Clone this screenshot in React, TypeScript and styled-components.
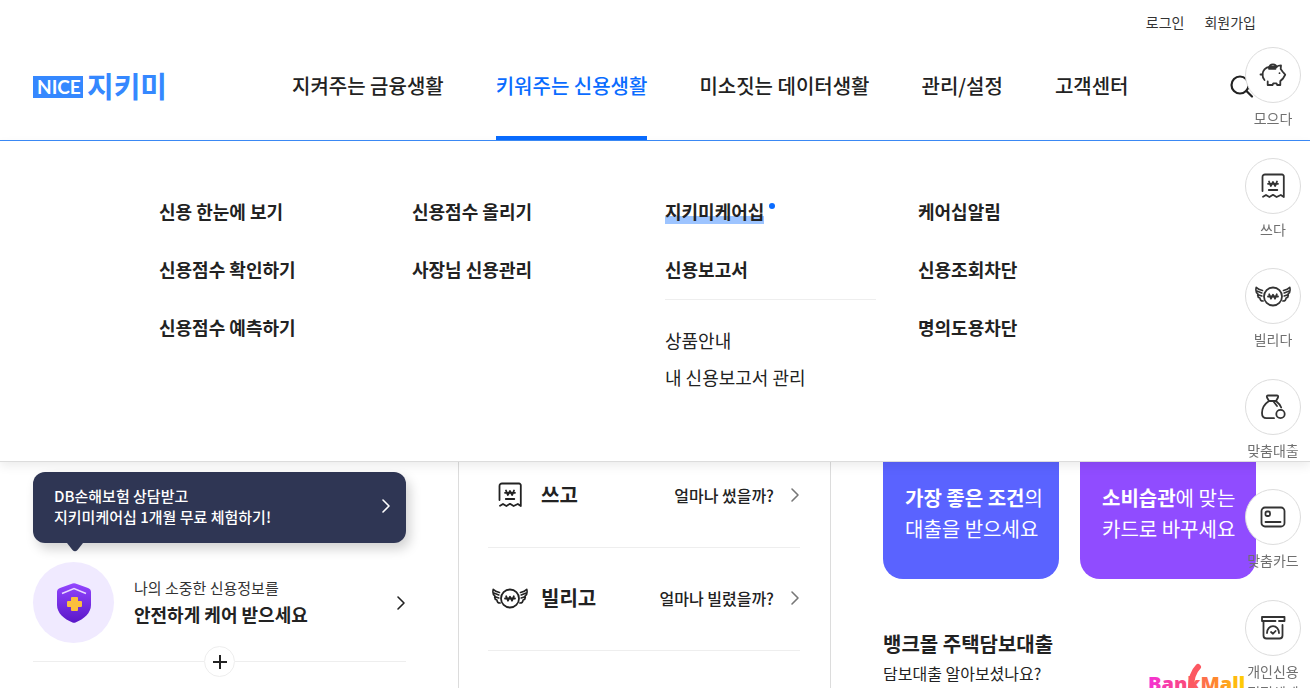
import React from 'react';
import styled, { createGlobalStyle } from 'styled-components';

const GlobalStyle = createGlobalStyle`
  *, *::before, *::after { box-sizing: border-box; }
  body {
    margin: 0;
    background: #fff;
    color: #222;
    font-family: 'Noto Sans CJK KR', 'Noto Sans', sans-serif;
    font-size: 16px;
  }
  a { color: inherit; text-decoration: none; }
  ul { list-style: none; margin: 0; padding: 0; }
  button { font: inherit; color: inherit; background: none; border: 0; padding: 0; cursor: pointer; }
  h2, h3, p { margin: 0; }
  svg { display: block; flex: none; }
`;

const Page = styled.div`
  height: 100vh;
  overflow: hidden;
`;

const Header = styled.header`
  position: relative;
  z-index: 2;
  background: #fff;
  border-bottom: 1px solid #3b8af7;
  padding: 0 54px 0 33px;
`;

const Utility = styled.nav`
  display: flex;
  justify-content: flex-end;
  gap: 20px;
  padding-top: 12px;
  font-size: 14px;
  line-height: 20px;
  color: #333;
`;

const NavBar = styled.div`
  display: flex;
  align-items: stretch;
  height: 108px;
`;

const LogoLink = styled.a`
  display: flex;
  align-items: center;
  width: 259px;
`;

const NavList = styled.ul`
  display: flex;
  gap: 52px;
  flex: 1;
`;

const NavLink = styled.a<{ $active?: boolean }>`
  display: flex;
  align-items: center;
  height: 100%;
  font-size: 20px;
  font-weight: 500;
  line-height: 28px;
  white-space: nowrap;
  color: ${(p) => (p.$active ? '#0a6cff' : '#222')};
  box-shadow: ${(p) => (p.$active ? 'inset 0 -4px 0 #0a6cff' : 'none')};
`;

const SearchButton = styled.button`
  display: flex;
  align-items: center;
`;

const MegaMenu = styled.nav`
  position: relative;
  z-index: 2;
  display: grid;
  grid-template-columns: repeat(4, minmax(0, 1fr));
  gap: 42px;
  padding: 57px 181px 71px 159px;
  background: #fff;
  border-bottom: 1px solid #dcdcdc;
  box-shadow: 0 4px 10px rgba(0, 0, 0, 0.08);
`;

const MenuColumn = styled.ul`
  display: flex;
  flex-direction: column;
  gap: 32px;
`;

const MenuLink = styled.a<{ $current?: boolean }>`
  display: inline-block;
  position: relative;
  font-size: 18px;
  font-weight: 700;
  line-height: 26px;
  background: ${(p) =>
    p.$current
      ? 'linear-gradient(#9dc4ff, #9dc4ff) 0 18px / 100% 8px no-repeat'
      : 'none'};
`;

const NewDot = styled.span`
  position: absolute;
  top: 5px;
  right: -11px;
  width: 6px;
  height: 6px;
  border-radius: 50%;
  background: #0a6cff;
`;

const SubMenu = styled.ul`
  display: flex;
  flex-direction: column;
  gap: 11px;
  margin-top: 17px;
  padding-top: 27px;
  border-top: 1px solid #eee;
  font-size: 18px;
  line-height: 26px;
`;

const Main = styled.main`
  display: grid;
  grid-template-columns: 425fr 373fr 425fr;
  height: 100%;
  padding: 0 54px 0 33px;
`;

const CarePanel = styled.section`
  padding: 10px 52px 0 0;
`;

const Banner = styled.a`
  position: relative;
  display: flex;
  align-items: center;
  justify-content: space-between;
  padding: 13px 15px 16px 21px;
  border-radius: 12px;
  background: #2f3654;
  box-shadow: 4px 6px 12px rgba(0, 0, 0, 0.18);
  color: #fff;
  font-size: 15px;
  font-weight: 500;
  line-height: 21px;
`;

const BannerTail = styled.svg`
  position: absolute;
  left: 34px;
  top: 100%;
`;

const CareLink = styled.a`
  display: flex;
  align-items: center;
  gap: 20px;
  margin-top: 19px;
`;

const ShieldBadge = styled.span`
  display: flex;
  align-items: center;
  justify-content: center;
  width: 81px;
  height: 81px;
  border-radius: 50%;
  background: #f0eaff;
`;

const CareText = styled.span`
  flex: 1;
  display: flex;
  flex-direction: column;
  padding-bottom: 3px;
  font-size: 15px;
  line-height: 25px;
  color: #333;
`;

const CareStrong = styled.strong`
  font-size: 18px;
  line-height: 28px;
  color: #222;
`;

const MoreLine = styled.div`
  display: flex;
  align-items: center;
  margin-top: 3px;

  &::before, &::after {
    content: '';
    flex: 1;
    height: 1px;
    background: #eee;
  }
`;

const MoreButton = styled.button`
  display: flex;
  align-items: center;
  justify-content: center;
  width: 31px;
  height: 31px;
  border: 1px solid #eee;
  border-radius: 50%;
`;

const ServicePanel = styled.section`
  border: solid #dcdcdc;
  border-width: 0 1px;
  padding: 0 30px 0 29px;
`;

/* The list is scrolled slightly under the open menu. */
const ServiceList = styled.ul`
  margin-top: -17px;
`;

const ServiceLink = styled.a`
  display: flex;
  align-items: center;
  height: 103px;
  padding-bottom: 2px;
  border-bottom: 1px solid #eee;
`;

const ServiceIcon = styled.span`
  display: flex;
  justify-content: center;
  width: 43px;
  margin-right: 10px;
`;

const ServiceName = styled.strong`
  flex: 1;
  font-size: 20px;
  line-height: 28px;
`;

const ServiceHint = styled.span`
  margin-right: 16px;
  font-size: 16px;
  font-weight: 500;
  line-height: 24px;
`;

const OfferPanel = styled.section`
  padding-left: 52px;
`;

const CardRow = styled.div`
  display: grid;
  grid-template-columns: repeat(2, minmax(0, 1fr));
  gap: 21px;
`;

const OfferCard = styled.a<{ $color: string }>`
  padding: 20px 0 35px 22px;
  border-radius: 0 0 20px 20px;
  background: ${(p) => p.$color};
  color: #fff;
  font-size: 20px;
  line-height: 31px;
  white-space: nowrap;
`;

const BankLink = styled.a`
  display: flex;
  justify-content: space-between;
  margin-top: 50px;
`;

const BankTitle = styled.h3`
  font-size: 20px;
  line-height: 30px;
`;

const BankText = styled.p`
  font-size: 16px;
  line-height: 28px;
`;

const BankLogo = styled.svg`
  margin: 33px 10px 0 0;
`;

const QuickMenu = styled.ul`
  position: fixed;
  z-index: 3;
  top: 47px;
  right: 9px;
  display: grid;
  grid-template-rows: repeat(6, 1fr);
  height: 663px;
`;

const QuickLink = styled.a`
  display: flex;
  flex-direction: column;
  align-items: center;
  gap: 5px;
  width: 56px;
  font-size: 14px;
  line-height: 21px;
  text-align: center;
  color: #707070;
`;

const QuickCircle = styled.span`
  display: flex;
  align-items: center;
  justify-content: center;
  width: 56px;
  height: 56px;
  border: 1px solid #dcdcdc;
  border-radius: 50%;
  background: #fff;
  color: #333;
`;

const stroke = {
  fill: 'none',
  stroke: 'currentColor',
  strokeWidth: 1.8,
  strokeLinecap: 'round' as const,
  strokeLinejoin: 'round' as const,
};

const NiceLogo = () => (
  <svg width="140" height="48" viewBox="0 0 140 48" role="img" aria-label="NICE 지키미">
    <rect x="0" y="14" width="50" height="22" fill="#3588ff" />
    <text x="4" y="32" fill="#fff" fontFamily="Lato, sans-serif" fontWeight="700" fontSize="19">NICE</text>
    <text x="54" y="36" fill="#3588ff" fontFamily="'Noto Sans CJK KR', sans-serif" fontWeight="700" fontSize="29">지키미</text>
  </svg>
);

const Chevron = ({ color }: { color: string }) => (
  <svg width="10" height="16" viewBox="0 0 10 16" fill="none" stroke={color} strokeWidth="1.600" strokeLinecap="round" strokeLinejoin="round">
    <path d="M2 2l6 6-6 6" />
  </svg>
);

const PigIcon = () => (
  <svg width="28" height="28" viewBox="0 0 28 28" {...stroke}>
    <path d="M5.500 19C4 17.300 3.500 15.500 3.500 13.500 3.500 9.500 6.500 6.300 10.500 6h6.500c1.500-1 3-1.600 5-1.600l-.3 3.600 1.800 2.500 2.700 3.200-2.200 3.800c-1 1-1.700 1.800-2.700 2.400V24h-3l-.8-1.700h-3.200L13.500 24H8.700v-3.500" />
    <path d="M10 7.500c.2-2.700 1.800-4 4-4s3.300 1 3.500 2.800M10 7.800h6.500M1.500 13.500h2" />
    <circle cx="20.500" cy="12.200" r=".9" fill="currentColor" stroke="none" />
  </svg>
);

const ReceiptIcon = () => (
  <svg width="26" height="28" viewBox="0 0 26 28" {...stroke}>
    <path d="M2.500 19V5A2.500 2.500 0 0 1 5 2.500H22A1.800 1.800 0 0 1 23.800 4.300V25l-3-2-4.200 2-3.600-2.200-3.600 2.200-3.400-2L3 24.800" />
    <path d="M9 9.500l1.800 4.500L13 10l2.200 4L17 9.500M8 11.800h10M8.800 18h8.500" />
  </svg>
);

const WingIcon = () => (
  <svg width="36" height="24" viewBox="0 0 36 24" {...stroke}>
    <circle cx="18" cy="12.500" r="9" />
    <path d="M14.200 10.300l1.800 4.400 2-4 2 4 1.800-4.400M13 12.500h10" />
    <path d="M7.500 6.500C5.500 6 3 5.200 1.200 3.400.5 6.500 1.200 9 2.900 10c-.5 1.900.2 3.600 2 4.100.2 1.900 1.300 3 3.300 2.900M1.800 7l5 1.900M3.800 11l3 1" strokeWidth="1.600" />
    <path d="M28.500 6.500c2-.5 4.500-1.300 6.300-3.100.7 3.100 0 5.600-1.700 6.600.5 1.900-.2 3.600-2 4.100-.2 1.900-1.300 3-3.300 2.900M34.200 7l-5 1.900M32.200 11l-3 1" strokeWidth="1.600" />
  </svg>
);

const BagIcon = () => (
  <svg width="28" height="28" viewBox="0 0 28 28" {...stroke}>
    <path d="M10 8L8 4.500C7.500 3.300 8 2.500 9.200 2.500h8.600c1.200 0 1.700.8 1.200 2L17 8zM10 8C5.500 11 3 15.500 3 20c0 3.800 1.500 5.200 4.500 5.200H15M17 8c2.500 2 4.200 4 5.200 6.500M14.500 8.500l3.500 4.500" />
    <circle cx="21.500" cy="21" r="4.200" />
  </svg>
);

const CardIcon = () => (
  <svg width="26" height="22" viewBox="0 0 26 22" {...stroke}>
    <rect x="1.500" y="1.500" width="23" height="19" rx="3.500" />
    <rect x="5.500" y="5.500" width="4.500" height="4.500" rx="1.500" />
    <path d="M5.500 16h15" />
  </svg>
);

const ScoreIcon = () => (
  <svg width="26" height="26" viewBox="0 0 26 26" {...stroke}>
    <path d="M15.500 6H2V2h22.500v4H19M3.500 6v14.500a3 3 0 0 0 3 3h13a3 3 0 0 0 3-3V10" />
    <path d="M7 18C7 14 9.600 11.200 13 11.200s6 2.800 6 6.800M11 17l2 1.700 2.600-2.700" />
  </svg>
);

const ShieldIcon = () => (
  <svg width="36" height="40" viewBox="0 0 36 40">
    <defs>
      <linearGradient id="shield" x1="0" y1="0" x2="0" y2="1">
        <stop offset="0" stopColor="#9346ff" />
        <stop offset="1" stopColor="#5a17c8" />
      </linearGradient>
    </defs>
    <path d="M16.500.5q1.500-.6 3 0L32 5q3 1 3 4v13c0 8-7 14-15.500 17.500q-1.500.5-3 0C8 36 1 30 1 22V9q0-3 3-4z" fill="url(#shield)" />
    <path d="M6 10.500l12-5 12 5" fill="none" stroke="#ead9ff" strokeWidth="1.500" />
    <path d="M16 14h5q1 0 1 1v3h3q1 0 1 1v4q0 1-1 1h-3v3q0 1-1 1h-5q-1 0-1-1v-3h-3q-1 0-1-1v-4q0-1 1-1h3v-3q0-1 1-1z" fill="#fbbf3c" />
  </svg>
);

const navItems = ['지켜주는 금융생활', '키워주는 신용생활', '미소짓는 데이터생활', '관리/설정', '고객센터'];

const menuColumns: { label: string; current?: boolean; children?: string[] }[][] = [
  [{ label: '신용 한눈에 보기' }, { label: '신용점수 확인하기' }, { label: '신용점수 예측하기' }],
  [{ label: '신용점수 올리기' }, { label: '사장님 신용관리' }],
  [{ label: '지키미케어십', current: true }, { label: '신용보고서', children: ['상품안내', '내 신용보고서 관리'] }],
  [{ label: '케어십알림' }, { label: '신용조회차단' }, { label: '명의도용차단' }],
];

const services = [
  { name: '쓰고', hint: '얼마나 썼을까?', icon: <ReceiptIcon /> },
  { name: '빌리고', hint: '얼마나 빌렸을까?', icon: <WingIcon /> },
];

const quickItems = [
  { label: '모으다', icon: <PigIcon /> },
  { label: '쓰다', icon: <ReceiptIcon /> },
  { label: '빌리다', icon: <WingIcon /> },
  { label: '맞춤대출', icon: <BagIcon /> },
  { label: '맞춤카드', icon: <CardIcon /> },
  { label: '개인신용평점체계', icon: <ScoreIcon /> },
];

export default function App() {
  return (
    <Page>
      <GlobalStyle />
      <Header>
        <Utility aria-label="회원">
          <a href="#login">로그인</a>
          <a href="#join">회원가입</a>
        </Utility>
        <NavBar>
          <LogoLink href="#home"><NiceLogo /></LogoLink>
          <NavList>
            {navItems.map((item, i) => (
              <li key={item}><NavLink href="#nav" $active={i === 1}>{item}</NavLink></li>
            ))}
          </NavList>
          <SearchButton type="button" aria-label="검색">
            <svg width="26" height="26" viewBox="0 0 26 26" fill="none" stroke="#222" strokeWidth="2.200" strokeLinecap="round">
              <circle cx="10" cy="12" r="8.500" />
              <path d="M16.500 18L22 23.500" />
            </svg>
          </SearchButton>
        </NavBar>
      </Header>

      <MegaMenu aria-label="키워주는 신용생활">
        {menuColumns.map((column, i) => (
          <MenuColumn key={i}>
            {column.map((item) => (
              <li key={item.label}>
                <MenuLink href="#menu" $current={item.current}>
                  {item.label}
                  {item.current && <NewDot />}
                </MenuLink>
                {item.children && (
                  <SubMenu>
                    {item.children.map((child) => (
                      <li key={child}><a href="#sub">{child}</a></li>
                    ))}
                  </SubMenu>
                )}
              </li>
            ))}
          </MenuColumn>
        ))}
      </MegaMenu>

      <Main>
        <CarePanel>
          <Banner href="#trial">
            <span>DB손해보험 상담받고<br />지키미케어십 1개월 무료 체험하기!</span>
            <Chevron color="#fff" />
            <BannerTail width="16" height="9" viewBox="0 0 16 9">
              <path d="M0 0h16l-5.500 7q-2.500 2.500-5 0z" fill="#2f3654" />
            </BannerTail>
          </Banner>
          <CareLink href="#care">
            <ShieldBadge><ShieldIcon /></ShieldBadge>
            <CareText>
              나의 소중한 신용정보를
              <CareStrong>안전하게 케어 받으세요</CareStrong>
            </CareText>
            <Chevron color="#222" />
          </CareLink>
          <MoreLine>
            <MoreButton type="button" aria-label="더보기">
              <svg width="16" height="16" viewBox="0 0 16 16" stroke="#222" strokeWidth="2">
                <path d="M8 1v14M1 8h14" />
              </svg>
            </MoreButton>
          </MoreLine>
        </CarePanel>

        <ServicePanel>
          <ServiceList>
            {services.map((service) => (
              <li key={service.name}>
                <ServiceLink href="#service">
                  <ServiceIcon>{service.icon}</ServiceIcon>
                  <ServiceName>{service.name}</ServiceName>
                  <ServiceHint>{service.hint}</ServiceHint>
                  <Chevron color="#777" />
                </ServiceLink>
              </li>
            ))}
          </ServiceList>
        </ServicePanel>

        <OfferPanel>
          <CardRow>
            <OfferCard href="#loan" $color="#5a63ff"><b>가장 좋은 조건</b>의<br />대출을 받으세요</OfferCard>
            <OfferCard href="#card" $color="#904cff"><b>소비습관</b>에 맞는<br />카드로 바꾸세요</OfferCard>
          </CardRow>
          <BankLink href="#bankmall">
            <div>
              <BankTitle>뱅크몰 주택담보대출</BankTitle>
              <BankText>담보대출 알아보셨나요?</BankText>
            </div>
            <BankLogo width="98" height="36" viewBox="0 0 98 36" role="img" aria-label="BankMall">
              <defs>
                <linearGradient id="bank" gradientUnits="userSpaceOnUse" x1="0" y1="0" x2="98" y2="0">
                  <stop offset="0" stopColor="#f431d8" />
                  <stop offset=".4" stopColor="#fb4a78" />
                  <stop offset=".7" stopColor="#ff8a2b" />
                  <stop offset="1" stopColor="#ffd400" />
                </linearGradient>
              </defs>
              <text x="0" y="29" fill="url(#bank)" fontFamily="'Open Sans', sans-serif" fontWeight="800" fontSize="20">BankMall</text>
              <path d="M43 27Q43 12 50 5" fill="none" stroke="#fc5862" strokeWidth="6" strokeLinecap="round" />
            </BankLogo>
          </BankLink>
        </OfferPanel>
      </Main>

      <QuickMenu>
        {quickItems.map((item) => (
          <li key={item.label}>
            <QuickLink href="#quick">
              <QuickCircle>{item.icon}</QuickCircle>
              {item.label}
            </QuickLink>
          </li>
        ))}
      </QuickMenu>
    </Page>
  );
}
